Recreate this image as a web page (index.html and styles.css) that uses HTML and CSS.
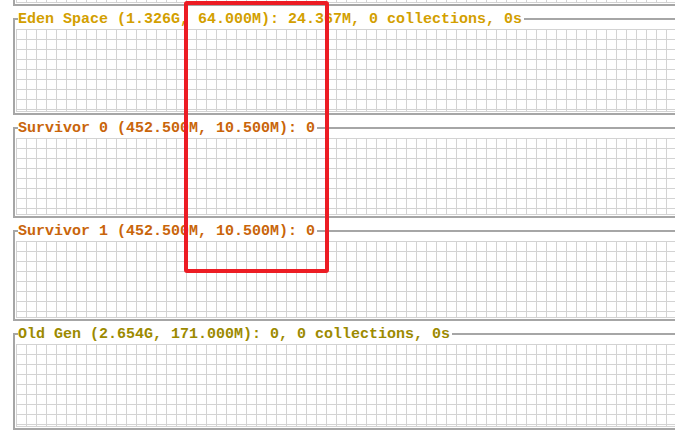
FILE: index.html
```html
<!DOCTYPE html>
<html lang="en">
<head>
<meta charset="utf-8">
<title>Memory pools</title>
<link rel="stylesheet" href="styles.css">
</head>
<body>
<main class="pools">
  <section class="pool pool-prev">
    <div class="pool-body"><div class="chart chart-stub"></div></div>
  </section>
  <section class="pool">
    <header class="pool-head"><span class="tick"></span><h2 class="title eden">Eden Space (1.326G, 64.000M): 24.367M, 0 collections, 0s</h2><span class="rule"></span></header>
    <div class="pool-body"><div class="chart chart-tall"></div></div>
  </section>
  <section class="pool">
    <header class="pool-head"><span class="tick"></span><h2 class="title survivor">Survivor 0 (452.500M, 10.500M): 0</h2><span class="rule"></span></header>
    <div class="pool-body"><div class="chart chart-short"></div></div>
  </section>
  <section class="pool">
    <header class="pool-head"><span class="tick"></span><h2 class="title survivor">Survivor 1 (452.500M, 10.500M): 0</h2><span class="rule"></span></header>
    <div class="pool-body"><div class="chart chart-short"></div></div>
  </section>
  <section class="pool">
    <header class="pool-head"><span class="tick"></span><h2 class="title old">Old Gen (2.654G, 171.000M): 0, 0 collections, 0s</h2><span class="rule"></span></header>
    <div class="pool-body"><div class="chart chart-tall"></div></div>
  </section>
</main>
<div class="highlight"></div>
</body>
</html>
```

FILE: styles.css
```css
html, body {
  margin: 0;
  padding: 0;
  background: #ffffff;
  overflow: hidden;
}

body {
  width: 675px;
  height: 435px;
  position: relative;
  font-family: "Liberation Mono", "DejaVu Sans Mono", monospace;
}

.pools {
  display: flex;
  flex-direction: column;
  margin-left: 13px;
  overflow: hidden;
}

.pool-head {
  display: flex;
  align-items: flex-start;
  height: 23px;
}

.tick {
  box-sizing: border-box;
  flex: none;
  width: 5px;
  height: 11px;
  margin-top: 12px;
  border-top: 2px solid #a6a6a6;
  border-left: 2px solid #a6a6a6;
}

.title {
  margin: 0;
  padding: 5px 2px 0 0;
  font-size: 15px;
  line-height: 17px;
  font-weight: bold;
  white-space: nowrap;
}

.eden { color: #d39f00; }
.survivor { color: #c9650a; }
.old { color: #9c8a00; }

.rule {
  flex: 1;
  margin-top: 12px;
  border-top: 2px solid #a6a6a6;
}

.pool-body {
  border-left: 2px solid #a6a6a6;
  border-bottom: 2px solid #a6a6a6;
  padding: 0 0 1px 1px;
}

.chart {
  background-color: #ffffff;
  background-image:
    linear-gradient(to right, #d3d3d3 1px, transparent 1px),
    linear-gradient(to bottom, #d3d3d3 1px, transparent 1px);
  background-size: 10px 10px;
  border-bottom: 1px solid #d3d3d3;
  box-sizing: border-box;
}

.chart-stub { height: 3px; background-position: 0 -8px, 0 -8px; }
.chart-tall { height: 83px; }
.chart-short { height: 77px; }

.highlight {
  position: absolute;
  left: 184px;
  top: 1px;
  width: 145px;
  height: 272px;
  box-sizing: border-box;
  border: 4px solid #ec1c24;
  border-radius: 3px;
}
```
